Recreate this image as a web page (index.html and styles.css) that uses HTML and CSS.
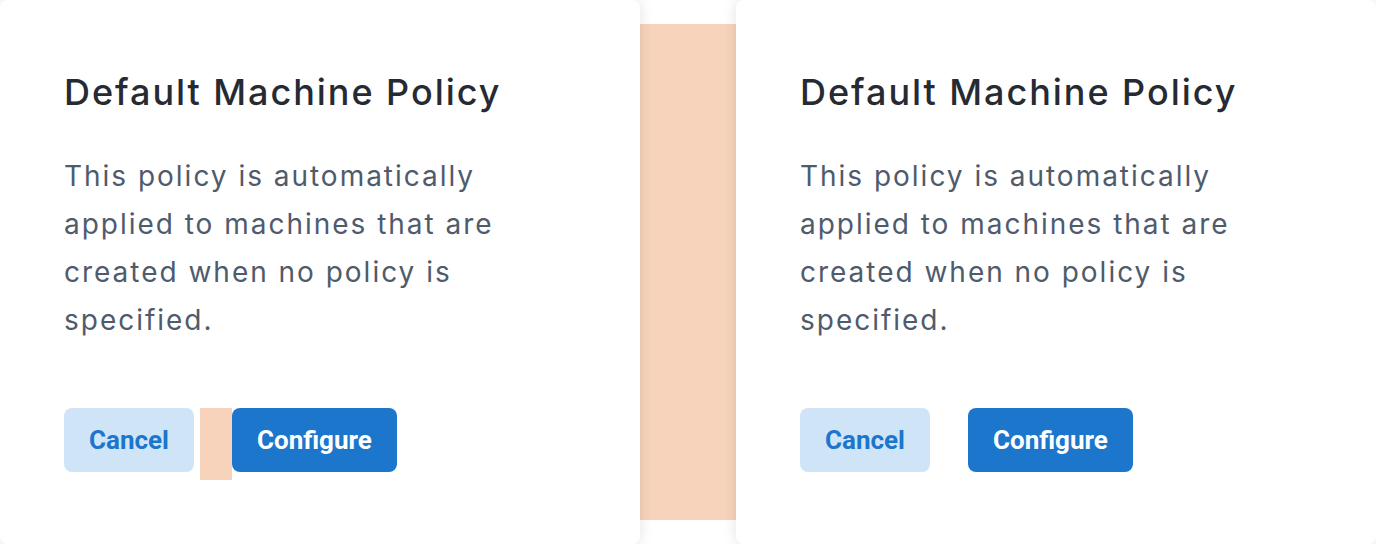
FILE: index.html
```html
<!DOCTYPE html>
<html lang="en">
<head>
<meta charset="utf-8">
<title>Default Machine Policy</title>
<link rel="stylesheet" href="styles.css">
</head>
<body>
<div class="row">
  <section class="card">
    <h2 class="title">Default Machine Policy</h2>
    <p class="desc">This policy is automatically applied to machines that are created when no policy is specified.</p>
    <div class="actions">
      <button class="btn btn-secondary">Cancel</button>
      <span class="margin-box highlighted"></span>
      <button class="btn btn-primary">Configure</button>
    </div>
  </section>
  <div class="gap-highlight"></div>
  <section class="card">
    <h2 class="title">Default Machine Policy</h2>
    <p class="desc">This policy is automatically applied to machines that are created when no policy is specified.</p>
    <div class="actions">
      <button class="btn btn-secondary">Cancel</button>
      <span class="margin-box"></span>
      <button class="btn btn-primary">Configure</button>
    </div>
  </section>
</div>
</body>
</html>
```

FILE: styles.css
```css
html, body {
  margin: 0;
  padding: 0;
  background: #ffffff;
}

.row {
  display: flex;
  height: 544px;
  overflow: hidden;
}

.card {
  position: relative;
  z-index: 1;
  flex: 0 0 640px;
  box-sizing: border-box;
  height: 544px;
  padding: 64px;
  background: #ffffff;
  border-radius: 8px;
  box-shadow: 0 0 14px rgba(0, 0, 0, 0.12);
}

.gap-highlight {
  flex: 0 0 96px;
  margin: 24px 0;
  background: #f7d3bb;
}

.title {
  margin: 0 0 32px;
  font-family: Inter, "Liberation Sans", sans-serif;
  font-weight: 500;
  font-size: 36px;
  line-height: 56px;
  color: #262b33;
  letter-spacing: 1.95px;
}

.desc {
  margin: 0;
  font-family: Inter, "Liberation Sans", sans-serif;
  font-weight: 400;
  font-size: 28px;
  line-height: 48px;
  color: #4f5b6c;
  letter-spacing: 1.98px;
  max-width: 450px;
}

.actions {
  display: flex;
  align-items: flex-start;
  margin-top: 64px;
}

.margin-box {
  display: block;
  flex: 0 0 32px;
  height: 72px;
  margin-left: 6px;
}

.margin-box.highlighted {
  background: #f7d3bb;
}

.btn {
  display: block;
  height: 64px;
  padding: 0 25px;
  border: 0;
  border-radius: 8px;
  font-family: Roboto, "Liberation Sans", sans-serif;
  font-weight: 700;
  font-size: 26px;
  line-height: 62px;
  cursor: pointer;
}

.btn-secondary {
  background: #cfe4f7;
  color: #1b76cc;
}

.btn-primary {
  background: #1b76cc;
  color: #ffffff;
}
```
